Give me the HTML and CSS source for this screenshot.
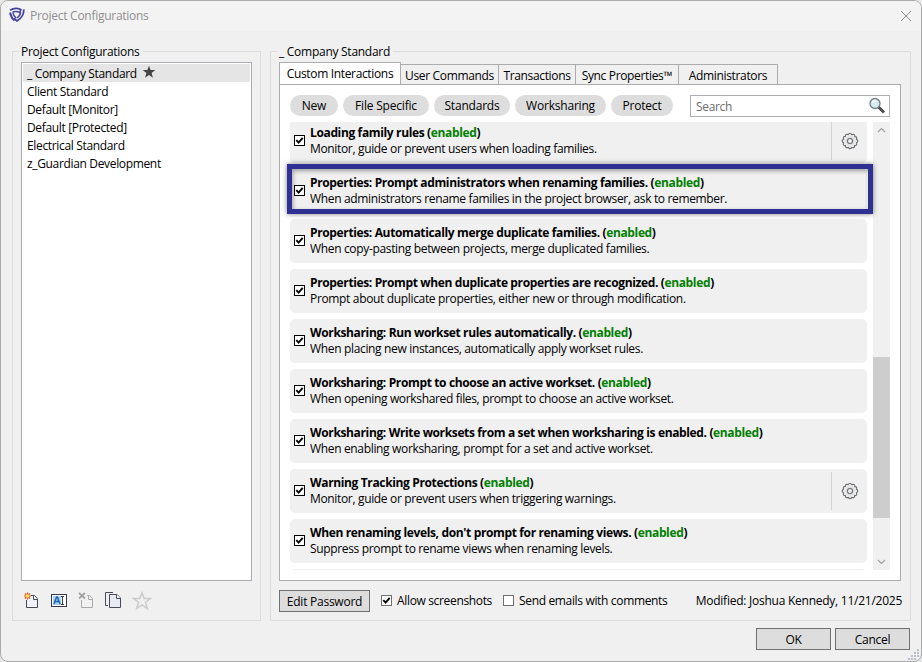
FILE: index.html
```html
<!DOCTYPE html>
<html lang="en">
<head>
  <meta charset="UTF-8" />
  <title>Project Configurations</title>
  <link rel="stylesheet" href="styles.css">
</head>
<body>
  <svg class="defs" width="0" height="0">
    <symbol id="check" viewBox="0 0 11 11">
      <path d="M2.300 5.200L4.600 7.500L8.700 2.800" fill="none" stroke="currentColor" stroke-width="1.900" />
    </symbol>
    <symbol id="gear" viewBox="0 0 18 18">
      <path d="M7.200 2.600Q9 -.2 10.800 2.600Q14.300 1.600 13.800 4.600Q16.400 4.400 15.500 7.200Q18.200 9 15.500 10.800Q16.400 13.800 13.600 13.600Q13.800 16.400 10.800 15.400Q9 18.200 7.200 15.400Q4.200 16.400 4.400 13.600Q1.600 13.800 2.500 10.800Q-.2 9 2.500 7.200Q1.600 4.200 4.400 4.400Q4.200 1.600 7.200 2.600z" fill="#eaeaea" stroke="#6b6d75" stroke-width="1.100" />
      <circle cx="9" cy="9" r="4.500" fill="#dcdcdc" />
      <circle cx="9" cy="9" r="2.500" fill="#f4f4f4" stroke="#6b6d75" stroke-width="1.100" />
    </symbol>
  </svg>

  <div class="window">
    <div class="titlebar">
      <svg class="logo" width="16" height="16" viewBox="0 0 16 16" fill="none" stroke="#4643a0">
        <path d="M1 3.200C4.500 1 8.500 1 11.800 2.600L10.500 6.500" stroke-width="1.700" />
        <path d="M14.800 2.400C15 8 12.200 11.500 8 14L5 11.500" stroke-width="1.800" />
        <path d="M1 5.500C1.800 9 3 11.500 5.500 13.500" stroke-width="2" />
        <path d="M3.500 5.200C5.500 4.300 8 4.300 10 5" stroke-width="1.400" />
        <path d="M11.800 5.500C11.300 8 10 9.500 8 11" stroke-width="1.500" />
        <path d="M3.800 5.500C4.300 8 5.300 9.800 7.300 11.300" stroke-width="1.400" />
      </svg>
      <span class="caption">Project Configurations</span>
      <svg class="close" width="12" height="12" viewBox="0 0 12 12"><path d="M1 1L11 11M11 1L1 11" stroke="#8c8c8c" fill="none" /></svg>
    </div>

    <div class="main">
      <fieldset class="group group-left">
        <legend>Project Configurations</legend>
        <div class="listbox">
          <div class="item selected">_ Company Standard
            <svg width="14" height="14" viewBox="0 0 14 14"><path d="M7 .7L8.600 5.100H13.300L9.600 8L10.900 12.700L7 10L3.100 12.700L4.400 8L.7 5.100H5.400z" fill="#444" /></svg>
          </div>
          <div class="item">Client Standard</div>
          <div class="item">Default [Monitor]</div>
          <div class="item">Default [Protected]</div>
          <div class="item">Electrical Standard</div>
          <div class="item">z_Guardian Development</div>
        </div>
        <div class="toolbar">
          <svg width="16" height="18" viewBox="0 0 16 18">
            <path d="M2.500 8V15.500H13.500V6.500L10.500 3.500H7" fill="#f1f2f6" stroke="#454b59" />
            <path d="M9.500 3.500V7.500H13.500" fill="#fff" stroke="#454b59" />
            <path d="M3.500 .5V7.500M0 4H7M1 1.500L6 6.500M6 1.500L1 6.500" stroke="#e0521b" stroke-width="1.200" />
            <rect x="2" y="2.500" width="3" height="3" fill="#ffe34d" />
          </svg>
          <svg width="16" height="18" viewBox="0 0 16 18">
            <rect x=".5" y="2.500" width="15" height="12" fill="#fff" stroke="#343b4b" />
            <rect x="2" y="4" width="8" height="9" fill="#a9d3f2" />
            <path d="M3 12L5.600 5H6.400L9 12M4 9.500H8" fill="none" stroke="#1c62b5" stroke-width="1.500" />
            <path d="M10 4.500H13M11.500 4.500V12.500M10 12.500H13" stroke="#343b4b" fill="none" />
          </svg>
          <svg width="16" height="18" viewBox="0 0 16 18">
            <path d="M3.500 8V15.500H14.500V6.500L11.500 3.500H9" fill="#f1f1f1" stroke="#a9a9a9" />
            <path d="M10.500 3.500V7.500H14.500" fill="none" stroke="#a9a9a9" />
            <path d="M1 1L7 6.500M7 1L1 6.500" stroke="#a2a2a2" stroke-width="1.800" />
          </svg>
          <svg width="17" height="18" viewBox="0 0 17 18">
            <path d="M8 .5H.5V13.500H3" fill="none" stroke="#454b59" />
            <path d="M4.500 2.500H12L15.500 6V15.500H4.500z" fill="#e9ebf2" stroke="#454b59" />
            <path d="M11.500 2.500V6.500H15.500" fill="#fff" stroke="#454b59" />
          </svg>
          <svg class="star" width="20" height="20" viewBox="0 0 20 20"><path d="M10 1.800L12.200 7.500H18.300L13.500 11.200L15.300 17.500L10 13.800L4.700 17.500L6.500 11.200L1.700 7.500H7.800z" fill="none" stroke="#cbcbcb" stroke-width="1.500" /></svg>
        </div>
      </fieldset>

      <fieldset class="group group-right">
        <legend>_ Company Standard</legend>
        <div class="tabs">
          <div class="tab active">Custom Interactions</div>
          <div class="tab tab-user">User Commands</div>
          <div class="tab tab-trans">Transactions</div>
          <div class="tab tab-sync">Sync Properties™</div>
          <div class="tab tab-admin">Administrators</div>
        </div>
        <div class="panel">
          <div class="filters">
            <span class="pill pill-new">New</span>
            <span class="pill pill-file">File Specific</span>
            <span class="pill pill-std">Standards</span>
            <span class="pill pill-work">Worksharing</span>
            <span class="pill pill-prot">Protect</span>
            <div class="search">
              <span>Search</span>
              <svg width="18" height="18" viewBox="0 0 18 18">
                <path d="M10.500 10L16 15.500" stroke="#4b4b4b" stroke-width="3" />
                <circle cx="7" cy="6.500" r="5" fill="#d5ecf0" stroke="#6f7e85" stroke-width="1.300" />
                <path d="M4.500 6C4.800 4.300 6 3.500 7.500 3.500" stroke="#fff" stroke-width="1.300" fill="none" />
              </svg>
            </div>
          </div>
          <div class="scroller">
            <div class="rows">
              <div class="row">
                <span class="box"><svg><use href="#check" /></svg></span>
                <div class="text"><b>Loading family rules (<i>enabled</i>)</b><p>Monitor, guide or prevent users when loading families.</p></div>
                <div class="settings"><svg width="18" height="18"><use href="#gear" /></svg></div>
              </div>
              <div class="row marked">
                <span class="box"><svg><use href="#check" /></svg></span>
                <div class="text"><b>Properties: Prompt administrators when renaming families. (<i>enabled</i>)</b><p>When administrators rename families in the project browser, ask to remember.</p></div>
              </div>
              <div class="row">
                <span class="box"><svg><use href="#check" /></svg></span>
                <div class="text"><b>Properties: Automatically merge duplicate families. (<i>enabled</i>)</b><p>When copy-pasting between projects, merge duplicated families.</p></div>
              </div>
              <div class="row">
                <span class="box"><svg><use href="#check" /></svg></span>
                <div class="text"><b>Properties: Prompt when duplicate properties are recognized. (<i>enabled</i>)</b><p>Prompt about duplicate properties, either new or through modification.</p></div>
              </div>
              <div class="row">
                <span class="box"><svg><use href="#check" /></svg></span>
                <div class="text"><b>Worksharing: Run workset rules automatically. (<i>enabled</i>)</b><p>When placing new instances, automatically apply workset rules.</p></div>
              </div>
              <div class="row">
                <span class="box"><svg><use href="#check" /></svg></span>
                <div class="text"><b>Worksharing: Prompt to choose an active workset. (<i>enabled</i>)</b><p>When opening workshared files, prompt to choose an active workset.</p></div>
              </div>
              <div class="row">
                <span class="box"><svg><use href="#check" /></svg></span>
                <div class="text"><b>Worksharing: Write worksets from a set when worksharing is enabled. (<i>enabled</i>)</b><p>When enabling worksharing, prompt for a set and active workset.</p></div>
              </div>
              <div class="row">
                <span class="box"><svg><use href="#check" /></svg></span>
                <div class="text"><b>Warning Tracking Protections (<i>enabled</i>)</b><p>Monitor, guide or prevent users when triggering warnings.</p></div>
                <div class="settings"><svg width="18" height="18"><use href="#gear" /></svg></div>
              </div>
              <div class="row">
                <span class="box"><svg><use href="#check" /></svg></span>
                <div class="text"><b>When renaming levels, don't prompt for renaming views. (<i>enabled</i>)</b><p>Suppress prompt to rename views when renaming levels.</p></div>
              </div>
              <div class="row"></div>
            </div>
            <div class="scrollbar">
              <svg width="9" height="6" viewBox="0 0 9 6"><path d="M1 5L4.500 1.500L8 5" fill="none" stroke="#a0a0a0" stroke-width="1.200" /></svg>
              <div class="thumb"></div>
              <svg width="9" height="6" viewBox="0 0 9 6"><path d="M1 1L4.500 4.500L8 1" fill="none" stroke="#a0a0a0" stroke-width="1.200" /></svg>
            </div>
          </div>
        </div>
        <div class="options">
          <span class="btn btn-password">Edit Password</span>
          <span class="box box-allow"><svg><use href="#check" /></svg></span>
          <span class="t-allow">Allow screenshots</span>
          <span class="box box-send"></span>
          <span class="t-send">Send emails with comments</span>
          <span class="modified">Modified: Joshua Kennedy, 11/21/2025</span>
        </div>
      </fieldset>
    </div>

    <div class="footer">
      <span class="btn">OK</span>
      <span class="btn">Cancel</span>
    </div>
    <svg class="grip" width="12" height="12" viewBox="0 0 12 12" fill="#b9bfd0">
      <path d="M9 0h2v2h-2zM6 3h2v2h-2zM9 3h2v2h-2zM3 6h2v2h-2zM6 6h2v2h-2zM9 6h2v2h-2zM0 9h2v2h-2zM3 9h2v2h-2zM6 9h2v2h-2z" />
    </svg>
  </div>
</body>
</html>
```

FILE: styles.css
```css
* {
  box-sizing: border-box;
}

body {
  margin: 0;
  background: #e8e8e8;
  font-family: "Open Sans", "Noto Sans", sans-serif;
  font-size: 12px;
  line-height: 16px;
  letter-spacing: -0.34px;
  color: #000;
}

svg {
  display: block;
  flex: none;
}

.defs {
  position: absolute;
}

.window {
  position: relative;
  width: 922px;
  height: 662px;
  border: 1px solid #ababab;
  border-radius: 8px;
  background: #f0f0f0;
  overflow: hidden;
}

.titlebar {
  display: flex;
  align-items: center;
  height: 30px;
  padding: 0 9px 0 8px;
  background: #f3f3f3;
  color: #8f8f8f;
}

.logo {
  margin-top: -2px;
}

.caption {
  margin-left: 5px;
  flex: 1;
  letter-spacing: -0.27px;
}

.main {
  display: flex;
  gap: 9px;
  padding: 12px 10px 0 11px;
}

.group {
  margin: 0;
  padding: 0 8px;
  border: 1px solid #dcdcdc;
  height: 578px;
  min-width: 0;
}

.group legend {
  height: 16px;
  margin-left: -2px;
  padding: 1px 3px 0 2px;
  white-space: pre;
  letter-spacing: -0.27px;
}

.group-left {
  width: 249px;
}

.group-right {
  width: 641px;
}

.listbox {
  height: 519px;
  margin-top: 3px;
  padding: 1px;
  border: 1px solid #abadb3;
  background: #fff;
}

.item {
  display: flex;
  gap: 5px;
  height: 18px;
  padding: 2px 4px 0;
}

.item svg {
  margin-top: -1px;
}

.selected {
  background: #e5e5e5;
}

.toolbar {
  display: flex;
  gap: 11px;
  padding: 11px 3px;
}

.star {
  margin-left: -1px;
  margin-top: -1px;
}

/* tabs */
.tabs {
  display: flex;
  align-items: flex-end;
  height: 23px;
  margin-top: 3px;
  position: relative;
}

.tab {
  height: 21px;
  padding-top: 3px;
  border: 1px solid #acacac;
  text-align: center;
  white-space: nowrap;
}

.tab.active {
  width: 122px;
  height: 23px;
  border-bottom: 0;
  background: #fff;
}

.tab-user { width: 98px; border-left: 0; }
.tab-trans { width: 77px; border-left: 0; }
.tab-sync { width: 103px; border-left: 0; }
.tab-admin { width: 99px; border-left: 0; }

.panel {
  width: 622px;
  height: 497px;
  margin-top: -1px;
  padding: 10px 10px 0;
  border: 1px solid #acacac;
  background: #fff;
}

.filters {
  display: flex;
  gap: 5px;
  height: 22px;
}

.pill {
  height: 21px;
  padding-top: 3px;
  border-radius: 11px;
  background: #ddd;
  text-align: center;
  letter-spacing: -0.2px;
}

.pill-new { width: 48px; }
.pill-file { width: 86px; }
.pill-std { width: 76px; }
.pill-work { width: 91px; }
.pill-prot { width: 62px; }

.search {
  display: flex;
  justify-content: space-between;
  width: 200px;
  margin-left: auto;
  padding: 3px 3px 0 5px;
  border: 1px solid #abadb3;
  color: #6d6d6d;
}

.search svg {
  margin-top: -2px;
}

/* interaction list */
.scroller {
  display: flex;
  justify-content: space-between;
  height: 448px;
  margin-top: 5px;
}

.rows {
  display: flex;
  flex-direction: column;
  justify-content: flex-end;
  gap: 6px;
  width: 577px;
  height: 491px;
  clip-path: inset(0 -12px 43px -12px);
}

.row {
  display: flex;
  flex: none;
  height: 44px;
  padding: 6px 0 0 4px;
  border-radius: 5px;
  background: #f0f0f0;
}

.marked {
  position: relative;
}

.marked::after {
  content: "";
  box-sizing: border-box;
  position: absolute;
  left: -3px;
  top: -5px;
  width: 586px;
  height: 50px;
  border: 5px solid #2e3192;
  box-shadow: 0 0 5px rgba(0, 0, 0, 0.5), inset 1px 2px 4px rgba(0, 0, 0, 0.35);
}

.box {
  flex: none;
  width: 11px;
  height: 11px;
  border: 1px solid #000;
  background: #fff;
}

.box svg {
  width: 11px;
  height: 11px;
  margin: -1px;
}

.row .box {
  margin-top: 10px;
}

.text {
  flex: 1;
  margin-left: 5px;
}

.text b {
  display: block;
  font-weight: 700;
  letter-spacing: -0.36px;
}

.text i {
  font-style: normal;
  color: #008000;
}

.text p {
  margin: 0;
}

.settings {
  width: 36px;
  height: 38px;
  margin-top: -3px;
  padding: 10px 0 0 9px;
  border-left: 1px solid #d2d2d2;
}

.scrollbar {
  position: relative;
  display: flex;
  flex-direction: column;
  align-items: center;
  justify-content: space-between;
  width: 17px;
  padding: 5px 0;
  background: #f0f0f0;
  z-index: -1;
}

.panel {
  position: relative;
  z-index: 0;
}

.thumb {
  width: 17px;
  height: 161px;
  margin-top: 183px;
  background: #cdcdcd;
}

/* bottom controls */
.options {
  display: flex;
  margin-top: 9px;
  white-space: nowrap;
}

.btn {
  width: 75px;
  height: 22px;
  padding-top: 3px;
  border: 1px solid #707070;
  background: #ddd;
  text-align: center;
  letter-spacing: -0.25px;
}

.btn-password {
  width: 91px;
}

.options .box {
  margin-top: 5px;
  border-color: #707070;
}

.box-allow {
  margin-left: 11px;
}

.t-allow,
.t-send {
  margin: 3px 0 0 5px;
}

.t-allow {
  width: 106px;
}

.modified {
  margin: 3px 0 0 auto;
  letter-spacing: -0.25px;
}

.footer {
  display: flex;
  justify-content: flex-end;
  gap: 4px;
  padding: 7px 11px 0 0;
}

.grip {
  position: absolute;
  right: 1px;
  bottom: 0;
}
```
